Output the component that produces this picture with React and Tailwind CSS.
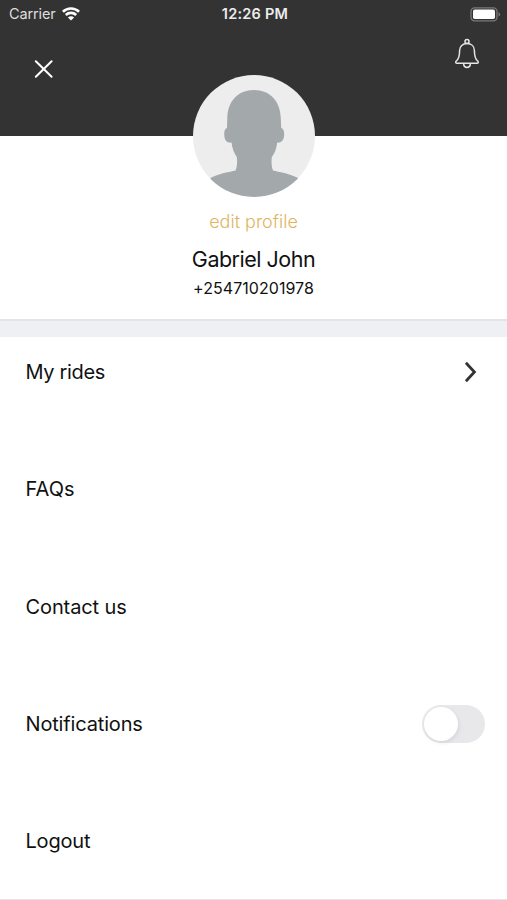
import React, { useState } from 'react';

const menuItems = [
  { id: 'rides', label: 'My rides', tracking: 'tracking-[-0.33px]', arrow: true },
  { id: 'faqs', label: 'FAQs', tracking: 'tracking-[0.05px]' },
  { id: 'contact', label: 'Contact us', tracking: 'tracking-[-0.1px]' },
  { id: 'notifications', label: 'Notifications', tracking: 'tracking-[-0.16px]', toggle: true },
  { id: 'logout', label: 'Logout', tracking: 'tracking-[-0.2px]' },
];

const WifiIcon = () => (
  <svg className="w-[18px] h-[14px]" viewBox="0 0 18 14" fill="none" stroke="#fff" strokeWidth="2.6">
    <path d="M0.9 4.7C5.4 0.4 12.6 0.4 17.1 4.7" />
    <path d="M3.8 8C6.7 5.2 11.3 5.2 14.2 8" />
    <path d="M9 13.6L5.9 10.5C7.6 8.9 10.4 8.9 12.1 10.5Z" fill="#fff" stroke="none" />
  </svg>
);

const BatteryIcon = () => (
  <svg className="w-[31px] h-[15px]" viewBox="0 0 31 15" fill="none">
    <rect x="1" y="0.8" width="26" height="13" rx="3.6" stroke="#7a7a7a" strokeWidth="1.3" />
    <rect x="3" y="2.6" width="22" height="9.4" rx="1.8" fill="#fff" />
    <path d="M28.5 5.2C30.7 6 30.7 8.6 28.5 9.4Z" fill="#7a7a7a" />
  </svg>
);

const BellIcon = () => (
  <svg className="w-[26px] h-[32px]" viewBox="0 0 26 32" fill="none" stroke="#e6e6e6" strokeWidth="1.5" strokeLinejoin="round">
    <circle cx="13" cy="3.6" r="2" />
    <path d="M13 5.5C8.7 5.5 5.6 8.3 5.6 12.5C5.6 18.5 5 21 2.3 23C1.2 24 1.7 25.2 3 25.2H23C24.3 25.2 24.8 24 23.7 23C21 21 20.4 18.5 20.4 12.5C20.4 8.3 17.3 5.5 13 5.5Z" />
    <path d="M9.6 25.4C9.8 30.8 16.2 30.8 16.4 25.4" />
  </svg>
);

const Avatar = () => (
  <svg className="w-[122px] h-[122px] rounded-full" viewBox="0 0 122 122">
    <rect width="122" height="122" fill="#ededed" />
    <path
      fill="#a3a8ab"
      d="M61 15C45 15 34.5 26 34.3 43.5L34 53C31.2 54 31 57.5 31.4 61.5C32 66 34.5 68.2 38.5 67.6C39.2 74 41.5 79 43.8 82C44.5 87 44 92 42.6 95.5C34 97.5 26 98.5 17.5 103V122H105V103C96 98.5 88.5 97.5 80 95.5C78.6 92 78.2 87 78.8 82C81.5 79 83.5 74 84.2 67.6C88 68 90.3 66 91 61.5C91.5 57.5 91 54 88.2 53L87.8 43.5C87.5 26 77 15 61 15Z"
    />
  </svg>
);

const Toggle = ({ checked, onChange }) => (
  <button
    role="switch"
    aria-checked={checked}
    aria-label="Notifications"
    onClick={() => onChange(!checked)}
    className={`w-[63px] h-[38px] p-[2px] rounded-full flex items-center ${
      checked ? 'bg-[#4cd964] justify-end' : 'bg-[#e8e8ea] justify-start'
    }`}
  >
    <span className="w-[34px] h-[34px] rounded-full bg-white shadow-[1px_2px_4px_rgba(0,0,0,0.08)]" />
  </button>
);

const App = () => {
  const [notifications, setNotifications] = useState(false);

  return (
    <div className="w-full h-[900px] overflow-hidden flex flex-col bg-white font-['Inter','Liberation_Sans',sans-serif] text-[#111]">
      {/* Header */}
      <header className="h-[136px] shrink-0 bg-[#333333] text-white">
        <div className="h-[28px] grid grid-cols-3 items-center pl-[9px] pr-[6px]">
          <div className="flex items-center gap-[6px]">
            <span className="text-[14.5px] leading-[20px] tracking-[-0.12px] text-[#dedede]">Carrier</span>
            <WifiIcon />
          </div>
          <span className="text-center text-[14.5px] leading-[20px] tracking-[0.25px] font-semibold text-[#ececec] whitespace-nowrap">12:26 PM</span>
          <div className="flex justify-end">
            <BatteryIcon />
          </div>
        </div>
        <div className="flex justify-between items-start pl-[34px] pr-[27px] pt-[10px]">
          <button aria-label="Close" className="mt-[21px]">
            <svg className="w-[20px] h-[20px]" viewBox="0 0 20 20" stroke="#fff" strokeWidth="2" strokeLinecap="round">
              <path d="M1.8 2.2L17.6 17.8M17.6 2.2L1.8 17.8" />
            </svg>
          </button>
          <button aria-label="Alerts">
            <BellIcon />
          </button>
        </div>
      </header>

      {/* Profile */}
      <section className="h-[183px] shrink-0 flex flex-col items-center">
        <div className="-mt-[61px]">
          <Avatar />
        </div>
        <button className="mt-[13px] text-[18px] leading-[24px] font-light text-[#dfb45f]">edit profile</button>
        <h1 className="mt-[11px] text-[21.5px] leading-[28px] tracking-[-0.5px]">Gabriel John</h1>
        <p className="mt-[5px] text-[16px] leading-[20px] tracking-[0.05px]">+254710201978</p>
      </section>

      <div className="h-[18px] shrink-0 bg-[#eef0f3] border-t-2 border-[#e2e4e6]" />

      {/* Menu */}
      <nav className="h-[563px] shrink-0 border-b border-[#e4e4e4]">
        {menuItems.map((item) => (
          <div key={item.id} className="h-[117.3px] flex items-start justify-between pl-[25.5px] pr-[22px] pt-[16px]">
            <div className="h-[38px] flex items-center">
              <span className={`text-[20px] leading-[28px] ${item.tracking}`}>{item.label}</span>
            </div>
            {item.arrow && (
              <svg className="w-[14px] h-[22px] mt-[8px] mr-[7px]" viewBox="0 0 14 22" fill="none" stroke="#333" strokeWidth="2.8">
                <path d="M1.9 1.8L10.4 11L1.9 20.2" />
              </svg>
            )}
            {item.toggle && <Toggle checked={notifications} onChange={setNotifications} />}
          </div>
        ))}
      </nav>
    </div>
  );
};

export default App;
